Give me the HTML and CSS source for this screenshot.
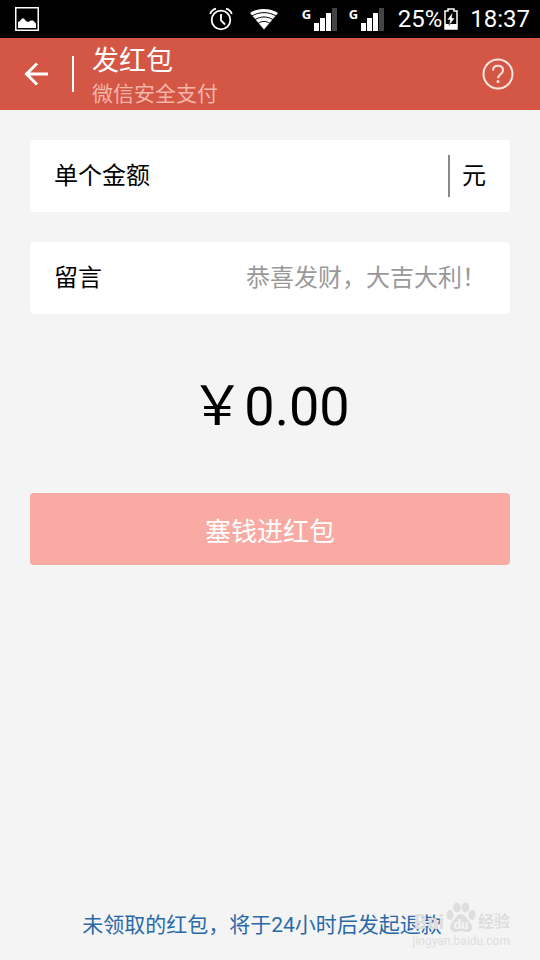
FILE: index.html
```html
<!DOCTYPE html>
<html lang="zh-CN">

<head>
    <meta charset="UTF-8">
    <meta name="viewport" content="width=device-width, initial-scale=1.0">
    <title>发红包</title>
    <link rel="stylesheet" href="styles.css">
</head>

<body>

    <div class="status-bar">
        <svg class="icon-picture" width="24" height="24" viewBox="0 0 24 24">
            <rect x="0.75" y="0.75" width="22.5" height="22.5" fill="none" stroke="#fff" stroke-width="1.5" />
            <path d="M3 21v-6l2-1 2-2.500h2l2 2.500 2 1 3-1.500h2l3 3v4.500z" fill="#fff" />
        </svg>
        <div class="status-icons">
            <svg width="24" height="24" viewBox="0 0 24 24" fill="none" stroke="#fff" stroke-width="1.800">
                <circle cx="12" cy="13" r="9.300" />
                <path d="M12 7v6.500l4 4M1.200 7C2 4.500 4 2.500 7 1.700M22.800 7C22 4.500 20 2.500 17 1.700" />
            </svg>
            <svg class="icon-wifi" width="28" height="22" viewBox="0 0 28 22">
                <path d="M14 21.500L0 5C8-0.500 20-0.500 28 5z" fill="#fff" />
                <path d="M2 8C9 3.500 19 3.500 26 8M5 11.800c5-3.800 13-3.800 18 0M8 15.500c3.500-2.700 8.500-2.700 12 0" fill="none" stroke="#000" stroke-width="1" />
            </svg>
            <div class="signal signal-first">
                <span>G</span>
                <svg width="23" height="23" viewBox="0 0 23 23" fill="#fff">
                    <path d="M0 15h5v8H0zM6 10h5v13H6zM12 5h5v18h-5z" />
                    <path d="M18 0h5v23h-5z" fill="#444" />
                </svg>
            </div>
            <div class="signal">
                <span>G</span>
                <svg width="23" height="23" viewBox="0 0 23 23" fill="#fff">
                    <path d="M0 15h5v8H0zM6 10h5v13H6zM12 5h5v18h-5z" />
                    <path d="M18 0h5v23h-5z" fill="#444" />
                </svg>
            </div>
            <span class="battery-level">25%</span>
            <svg class="icon-battery" width="14" height="22" viewBox="0 0 14 22">
                <path d="M1 21V3h3V1h6v2h3v18z" fill="none" stroke="#fff" stroke-width="1.500" />
                <path d="M1 16h12v5H1z" fill="#fff" />
                <path d="M8.500 4.500L3 12h3l-1 5.500L11 10H8z" fill="#fff" stroke="#000" stroke-width="0.500" />
            </svg>
            <span class="clock">18:37</span>
        </div>
    </div>

    <header class="top-bar">
        <button class="icon-button back" aria-label="返回">
            <svg width="24" height="24" viewBox="0 0 24 24" fill="none" stroke="#fff" stroke-width="3">
                <path d="M13 1.500L2.500 12 13 22.500M2.500 12H24" />
            </svg>
        </button>
        <div class="titles">
            <h1>发红包</h1>
            <p>微信安全支付</p>
        </div>
        <button class="icon-button help" aria-label="帮助">
            <svg width="32" height="32" viewBox="0 0 32 32" fill="none" stroke="#ffe6e0" stroke-width="2">
                <circle cx="16" cy="16" r="14.500" />
                <path d="M11 12.500C11 9.500 13 7.800 16 7.800s5 1.700 5 4.500c0 4-5 4-5 8" />
                <circle cx="16" cy="23.500" r="1.500" fill="#ffe6e0" stroke="none" />
            </svg>
        </button>
    </header>

    <main>
        <div class="field">
            <label for="amount">单个金额</label>
            <input type="text" id="amount" inputmode="decimal">
            <span class="unit">元</span>
        </div>

        <div class="field">
            <label for="message">留言</label>
            <input type="text" id="message" placeholder="恭喜发财，大吉大利！">
        </div>

        <div class="total">￥0.00</div>

        <button class="submit">塞钱进红包</button>
    </main>

    <footer>
        <a href="#">未领取的红包，将于24小时后发起退款</a>
        <div class="watermark">
            <div class="watermark-logo">
                <span>Bai</span>
                <svg width="30" height="32" viewBox="0 0 30 32">
                    <ellipse cx="4" cy="13" rx="3.500" ry="5" />
                    <ellipse cx="11" cy="5.500" rx="3.800" ry="5" />
                    <ellipse cx="19.500" cy="5.500" rx="3.800" ry="5" />
                    <ellipse cx="26" cy="13" rx="3.500" ry="5" />
                    <path d="M15 12c-4 0-5 4-8 7-5 5-3 11 2 11 3 0 4-1 6-1s3 1 6 1c6 0 7-6 2-11-3-3-4-7-8-7z" />
                    <text x="15" y="27" text-anchor="middle">du</text>
                </svg>
                <span>经验</span>
            </div>
            <div class="watermark-url">jingyan.baidu.com</div>
        </div>
    </footer>

</body>

</html>
```

FILE: styles.css
```css
* {
    box-sizing: border-box;
}

body {
    display: flex;
    flex-direction: column;
    min-height: 100vh;
    margin: 0;
    background-color: #f4f4f4;
    color: #000;
    font-family: Roboto, "Noto Sans CJK SC", sans-serif;
}

button,
input {
    font-family: inherit;
}

svg {
    display: block;
    flex-shrink: 0;
}

/* Phone status bar */
.status-bar {
    display: flex;
    align-items: center;
    justify-content: space-between;
    height: 38px;
    padding: 0 10px 0 15px;
    background-color: #000;
    color: #fff;
    font-size: 24px;
}

.status-icons {
    display: flex;
    align-items: center;
}

.icon-wifi {
    margin-left: 17px;
}

.signal {
    display: flex;
    margin-left: 12px;
}

.signal-first {
    margin-left: 24px;
}

.signal span {
    width: 12px;
    font-family: "Noto Sans", sans-serif;
    font-size: 13px;
    font-weight: bold;
    line-height: 12px;
}

.battery-level {
    margin-left: 14px;
}

.icon-battery {
    margin-left: 2px;
}

.clock {
    margin-left: 12px;
}

/* Red title bar */
.top-bar {
    display: flex;
    align-items: center;
    height: 72px;
    padding: 0 26px 0 24px;
    background-color: #d45645;
    color: #fff;
}

.icon-button {
    padding: 0;
    border: none;
    background: none;
    cursor: pointer;
}

.back {
    height: 36px;
    padding-right: 24px;
    border-right: 2px solid #fff;
}

.titles {
    flex: 1;
    margin-left: 18px;
    padding-top: 3px;
}

.titles h1 {
    margin: 0;
    font-size: 27px;
    font-weight: normal;
    line-height: 36px;
}

.titles p {
    margin: 0;
    color: #f5b5a9;
    font-size: 21px;
    line-height: 30px;
}

/* Form */
main {
    display: flex;
    flex-direction: column;
    padding: 30px;
}

.field {
    display: flex;
    align-items: center;
    height: 72px;
    margin-bottom: 30px;
    padding: 0 24px;
    border-radius: 4px;
    background-color: #fff;
    font-size: 24px;
    line-height: 42px;
}

.field input {
    flex: 1;
    min-width: 0;
    height: 42px;
    padding: 0;
    border: none;
    outline: none;
    background: none;
    font-size: 24px;
    text-align: right;
}

.field input::placeholder {
    color: #999;
    opacity: 1;
}

.unit {
    padding-left: 12px;
    border-left: 2px solid #888;
}

.total {
    margin: 31px 0 54px;
    font-size: 54px;
    line-height: 64px;
    text-align: center;
}

.submit {
    height: 72px;
    border: none;
    border-radius: 4px;
    background-color: #f8aaa3;
    color: #fff;
    font-size: 26px;
    cursor: pointer;
}

/* Refund note */
footer {
    position: relative;
    margin-top: auto;
    padding-bottom: 20px;
    text-align: center;
}

footer a {
    display: inline-block;
    margin-right: 16px;
    color: #2a69a8;
    font-size: 21px;
    line-height: 30px;
    text-decoration: none;
}

/* Watermark lies over the end of the note */
.watermark {
    position: absolute;
    right: 30px;
    bottom: 12px;
    color: #dedede;
    pointer-events: none;
}

.watermark-logo {
    display: flex;
    align-items: flex-end;
    justify-content: flex-end;
    font-size: 16px;
    font-weight: bold;
    line-height: 24px;
}

.watermark-logo span:first-child {
    font-size: 21px;
}

.watermark-logo svg {
    margin: 0 2px;
    fill: #dedede;
}

.watermark-logo text {
    fill: #f4f4f4;
    font-size: 13px;
}

.watermark-url {
    font-size: 12px;
    line-height: 14px;
}
```
